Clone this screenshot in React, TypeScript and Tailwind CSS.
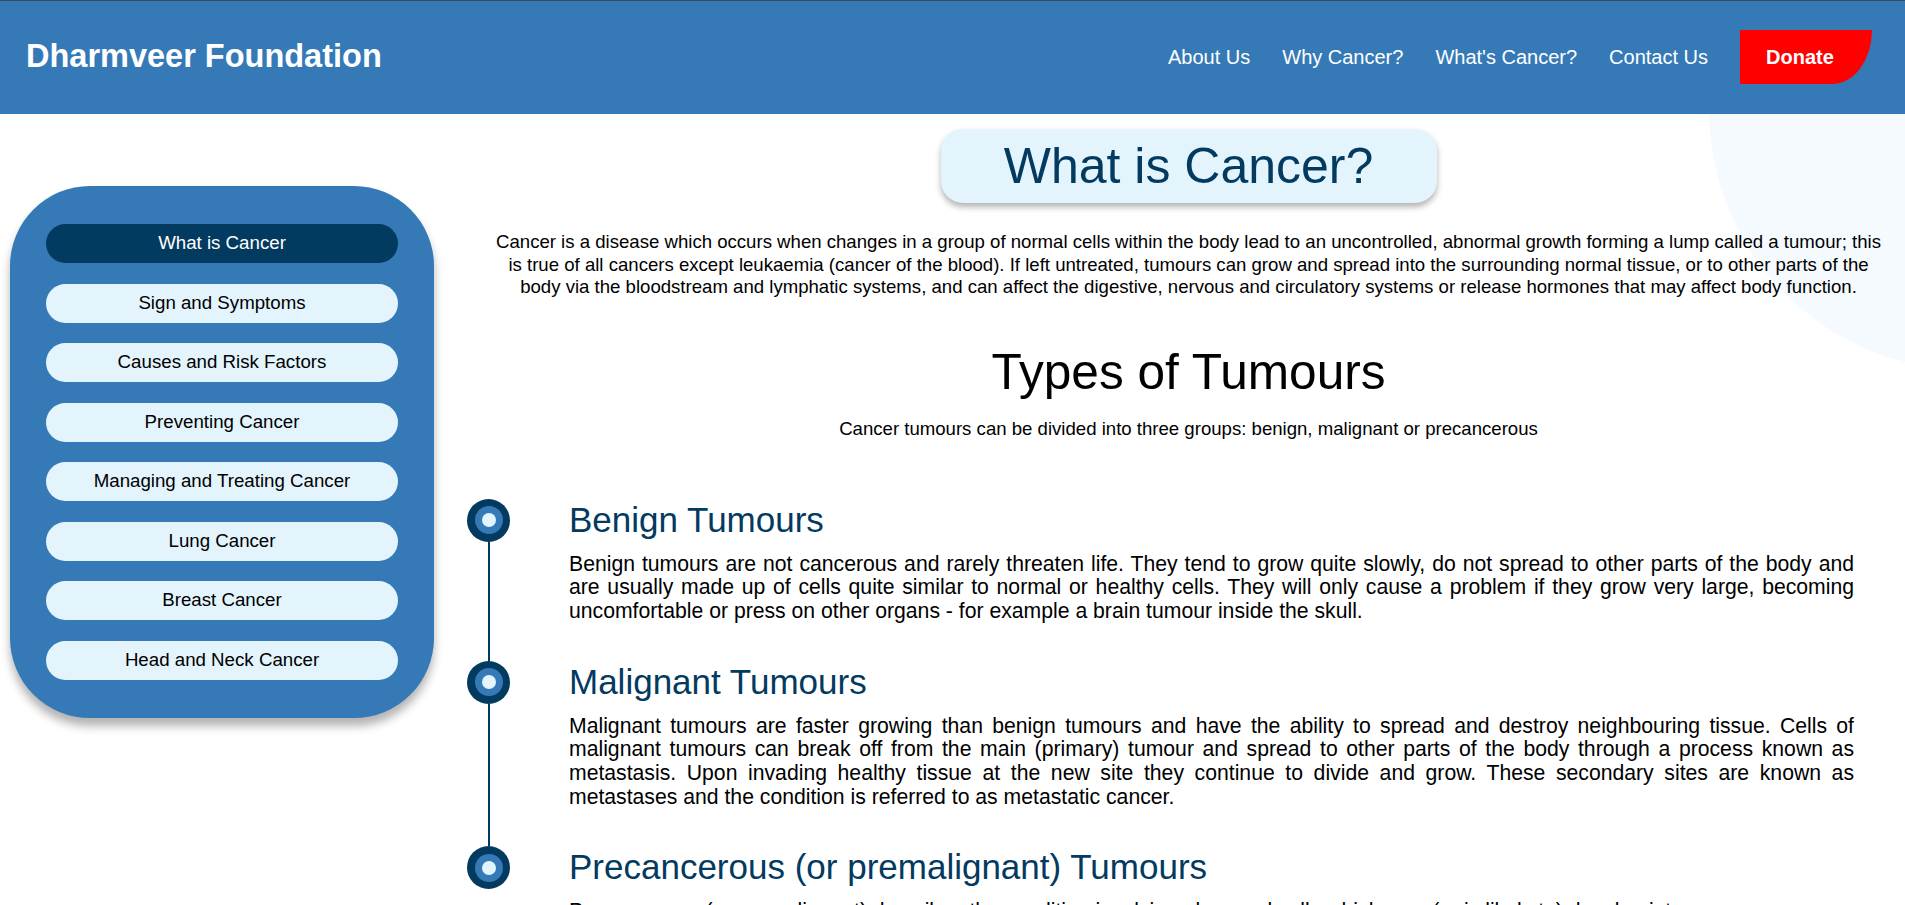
import { FC } from "react";

const menu = [
  "What is Cancer",
  "Sign and Symptoms",
  "Causes and Risk Factors",
  "Preventing Cancer",
  "Managing and Treating Cancer",
  "Lung Cancer",
  "Breast Cancer",
  "Head and Neck Cancer",
];

const tumours = [
  {
    title: "Benign Tumours",
    text: "Benign tumours are not cancerous and rarely threaten life. They tend to grow quite slowly, do not spread to other parts of the body and are usually made up of cells quite similar to normal or healthy cells. They will only cause a problem if they grow very large, becoming uncomfortable or press on other organs - for example a brain tumour inside the skull.",
  },
  {
    title: "Malignant Tumours",
    text: "Malignant tumours are faster growing than benign tumours and have the ability to spread and destroy neighbouring tissue. Cells of malignant tumours can break off from the main (primary) tumour and spread to other parts of the body through a process known as metastasis. Upon invading healthy tissue at the new site they continue to divide and grow. These secondary sites are known as metastases and the condition is referred to as metastatic cancer.",
  },
  {
    title: "Precancerous (or premalignant) Tumours",
    text: "Precancerous (or premalignant) describes the condition involving abnormal cells which may (or is likely to) develop into cancer.",
  },
];

const Navbar: FC = () => {
  return (
    <header className="flex h-[114px] items-center justify-between border-t border-[#3d4b59] bg-[#357ab7] pb-[2px] pl-[26px] pr-[33px]">
      <h1 className="text-[32.5px] font-bold text-white">Dharmveer Foundation</h1>
      <nav className="flex items-center gap-[32px] text-[20px] text-white">
        <a>About Us</a>
        <a>Why Cancer?</a>
        <a>What's Cancer?</a>
        <a>Contact Us</a>
        <button className="flex h-[54px] w-[132px] items-center rounded-br-[40px_54px] bg-[#ff0000] pl-[26px] font-bold text-white">
          Donate
        </button>
      </nav>
    </header>
  );
};

const Sidebar: FC = () => {
  return (
    <aside className="w-[467px] shrink-0 pl-[10px] pt-[72px]">
      <div className="flex w-[424px] flex-col gap-[20.5px] rounded-[80px] bg-[#357ab7] px-[36px] pt-[38px] pb-[38px] shadow-[0_8px_10px_rgba(0,0,0,0.3)]">
        {menu.map((item, i) => (
          <div
            key={item}
            className={
              i === 0
                ? "flex h-[39px] items-center justify-center rounded-full bg-[#033a5f] text-[18.7px] text-white"
                : "flex h-[39px] items-center justify-center rounded-full bg-[#e3f4fd] text-[18.7px] text-black"
            }
          >
            {item}
          </div>
        ))}
      </div>
    </aside>
  );
};

const Timeline: FC = () => {
  return (
    <div className="mt-[59px] -ml-[5px] flex flex-col self-stretch pr-[51px]">
      {tumours.map((t, i) => (
        <div key={t.title} className="flex">
          <div className="flex w-[43px] shrink-0 flex-col items-center">
            <div className="flex h-[43px] w-[43px] items-center justify-center rounded-full bg-[#033a5f]">
              <div className="flex h-[28px] w-[28px] items-center justify-center rounded-full bg-[#357ab7]">
                <div className="h-[14px] w-[14px] rounded-full bg-[#e3f4fd]"></div>
              </div>
            </div>
            {i < tumours.length - 1 && <div className="w-[2px] flex-1 bg-[#033a5f]"></div>}
          </div>
          <div className="ml-[59px] flex-1 pt-[1px] pb-[38px]">
            <h3 className="text-[35px] leading-[40px] text-[#033a5f]">{t.title}</h3>
            <p className="mt-[12px] text-justify text-[21.2px] leading-[23.7px] text-black">{t.text}</p>
          </div>
        </div>
      ))}
    </div>
  );
};

export default function App() {
  return (
    <div className="relative min-h-screen overflow-hidden bg-white font-['Liberation_Sans',Arial,sans-serif]">
      <div className="absolute top-[-150px] left-[1709px] h-[520px] w-[520px] rounded-full bg-[#f5faff]"></div>
      <div className="relative">
        <Navbar />
        <div className="flex">
          <Sidebar />
          <main className="flex flex-1 flex-col items-center pl-[5px]">
            <div className="mt-[15px] flex h-[74px] w-[496px] items-center justify-center rounded-[22px] bg-[#e3f4fd] shadow-[0_4px_6px_rgba(0,0,0,0.3)]">
              <h2 className="text-[50px] leading-none text-[#033a5f]">What is Cancer?</h2>
            </div>
            <p className="mt-[28px] px-[20px] text-center text-[18.6px] leading-[22.5px] text-black">
              Cancer is a disease which occurs when changes in a group of normal cells within the body lead to an
              uncontrolled, abnormal growth forming a lump called a tumour; this is true of all cancers except leukaemia
              (cancer of the blood). If left untreated, tumours can grow and spread into the surrounding normal tissue, or
              to other parts of the body via the bloodstream and lymphatic systems, and can affect the digestive, nervous
              and circulatory systems or release hormones that may affect body function.
            </p>
            <h2 className="mt-[45px] text-[49.6px] leading-[56px] text-black">Types of Tumours</h2>
            <p className="mt-[18px] text-[18.6px] leading-[22px] text-black">
              Cancer tumours can be divided into three groups: benign, malignant or precancerous
            </p>
            <Timeline />
          </main>
        </div>
      </div>
    </div>
  );
}
